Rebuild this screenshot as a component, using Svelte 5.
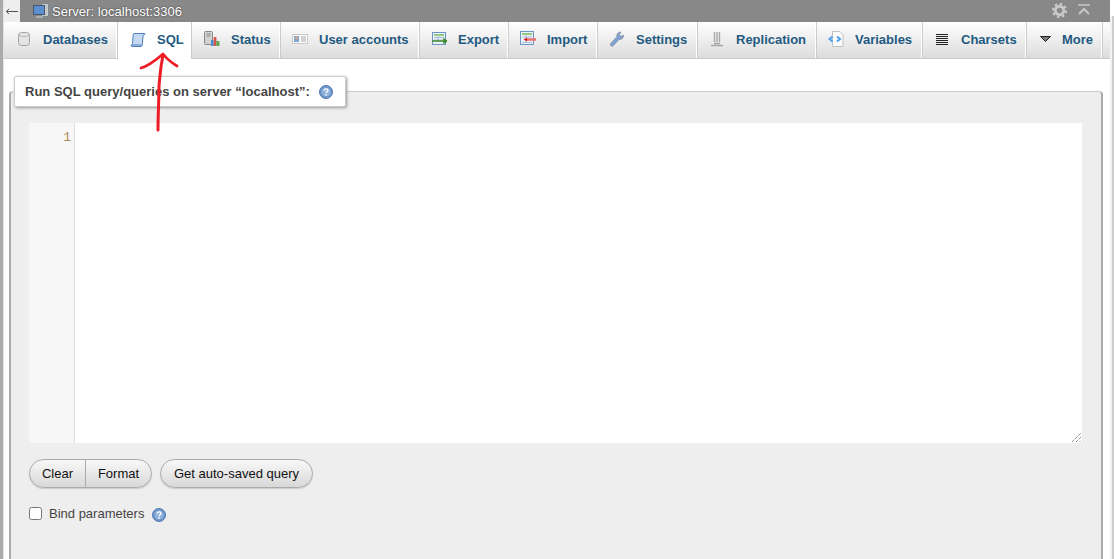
<script>
	const tabs = [
		{ name: 'Databases', w: 113, icon: 'db' },
		{ name: 'SQL', w: 75, icon: 'sql', active: true },
		{ name: 'Status', w: 88, icon: 'status' },
		{ name: 'User accounts', w: 139, icon: 'users' },
		{ name: 'Export', w: 89, icon: 'export' },
		{ name: 'Import', w: 89, icon: 'import' },
		{ name: 'Settings', w: 100, icon: 'settings' },
		{ name: 'Replication', w: 119, icon: 'replication' },
		{ name: 'Variables', w: 106, icon: 'variables' },
		{ name: 'Charsets', w: 104, icon: 'charsets' },
		{ name: 'More', w: 76, icon: 'more' }
	]
</script>

{#snippet help()}
	<svg class='help' width='14' height='14' viewBox='0 0 14 14'>
		<circle cx='7' cy='7' r='6.500' fill='#6d95c9' stroke='#4f7bb5' />
		<circle cx='7' cy='7' r='4.600' fill='#8fb2dc' />
		<path d='M5.200 5.600c.1-1.200 1-1.700 1.900-1.700 1.100 0 1.800.6 1.800 1.500 0 1.300-1.600 1.300-1.600 2.500' fill='none' stroke='#fff' stroke-width='1.400' />
		<rect x='6.400' y='9' width='1.500' height='1.500' fill='#fff' />
	</svg>
{/snippet}

{#snippet tabIcon(kind)}
	<svg width='16' height='16' viewBox='0 0 16 16'>
		{#if kind === 'db'}
			<rect x='2.500' y='1.500' width='11' height='13' rx='3' fill='#e4e4e4' stroke='#a5a5a5' />
			<path d='M3 4c2 2 8 2 10 0' fill='none' stroke='#b5b5b5' />
		{:else if kind === 'sql'}
			<path d='M4 1.500c-.5 0-.7.600-.8 1.500L2.500 11.500c-.1 1-.6 1.500-1.500 1.500 0 1 .5 1.500 1.200 1.500h8.800c.8 0 1.100-.6 1.200-1.500l.9-9.500c.1-.8.600-1 1.900-1 0-.6-.4-1-1-1z' fill='#c5daf2' stroke='#4d80bb' />
			<path d='M2 13h9.500' stroke='#4d80bb' />
		{:else if kind === 'status'}
			<rect x='.5' y='.5' width='8' height='13' rx='1' fill='#d2d2d2' stroke='#8a8a8a' />
			<path d='M2.500 3h4M2.500 5h4' stroke='#8a8a8a' />
			<rect x='7' y='9' width='2.700' height='6' fill='#4a8fd0' />
			<rect x='9.700' y='6' width='2.700' height='9' fill='#d9534f' />
			<rect x='12.400' y='10' width='3' height='5' fill='#5aa84f' />
		{:else if kind === 'users'}
			<rect x='.5' y='3.500' width='15' height='9' fill='#fbfbfb' stroke='#c9c9c9' />
			<rect x='2' y='5' width='5' height='6' fill='#7fa6d6' />
			<circle cx='4.500' cy='6.800' r='1.500' fill='#e8a47a' />
			<path d='M9 6h5M9 8h5M9 10h5' stroke='#a9a9a9' />
		{:else if kind === 'export'}
			<rect x='1.500' y='1.500' width='13' height='12' fill='#eef3fa' stroke='#6f94c6' />
			<path d='M3 4h10' stroke='#6fbf55' stroke-width='1.500' />
			<path d='M3 6.500h10M3 9h10M7 4v7' stroke='#a9bcd6' />
			<path d='M1 10h13M13 8l3 2-3 2z' stroke='#3e8a2a' stroke-width='1.300' fill='#3e8a2a' />
		{:else if kind === 'import'}
			<rect x='.5' y='.5' width='13' height='13' fill='#eef3fa' stroke='#6f94c6' />
			<path d='M2 3h10' stroke='#6fbf55' stroke-width='1.500' />
			<path d='M2 6h10M2 11.500h10M6 3v9' stroke='#a9bcd6' />
			<path d='M16 8.500H6' stroke='#f07070' stroke-width='2.500' />
			<path d='M7 6.500 3.500 8.500 7 10.500z' fill='#d92020' />
		{:else if kind === 'settings'}
			<path d='M2.200 15c-1.200-.8-1-2-.3-2.800l6-6.500c-.6-2 .9-4.700 4-4.700l-1.500 2.500 1.300 1.800 2.800-1c.3 2.500-2.100 4.700-4.500 4.100l-5.700 6.300c-.5.600-1.200.8-1.800.3z' fill='#7ba3d8' stroke='#8a8f96' stroke-width='.8' />
		{:else if kind === 'replication'}
			<path d='M5.500 1v10M8 1v10M10.500 1v10' stroke='#a8a8a8' stroke-width='1.400' />
			<path d='M2 14.500h12M5 12.500h6' stroke='#a8a8a8' stroke-width='1.500' />
		{:else if kind === 'variables'}
			<path d='M4.500 .5H12l3 3v12H4.500z' fill='#fbfbfb' stroke='#c2c2c2' />
			<path d='M4.500 5.500 1.500 8l3 2.500' fill='none' stroke='#4da0ee' stroke-width='2' />
			<path d='M9 5.500 12 8l-3 2.500' fill='none' stroke='#4da0ee' stroke-width='2' />
		{:else if kind === 'charsets'}
			<path d='M2 3.500h12M2 5.500h12M2 7.500h12M2 9.500h12M2 11.500h12M2 13.500h12' stroke='#222' />
		{:else}
			<path d='M2.500 5.500h10L7.500 10.500z' fill='#777' stroke='#222' />
		{/if}
	</svg>
{/snippet}

<div id='page'>
	<div class='strip'></div>
	<div class='main'>
		<header>
			<span class='back'>
				<svg width='12' height='7' viewBox='0 0 12 7'>
					<path d='M0 3.500h12M3 .8.500 3.500 3 6.200' fill='none' stroke='#555' />
				</svg>
			</span>
			<svg width='16' height='16' viewBox='0 0 16 16'>
				<rect x='8.500' y='.5' width='7' height='13' fill='#c4c9cc' stroke='#7f8a90' />
				<rect x='.5' y='2.500' width='11' height='9' fill='#5b8fd0' stroke='#47586b' />
				<path d='M3 14h7' stroke='#a8b0b6' stroke-width='2' />
			</svg>
			<span class='server'>Server: localhost:3306</span>
			<span class='grow'></span>
			<svg class='gear' width='15' height='15' viewBox='0 0 16 16'>
				<circle cx='8' cy='8' r='4.500' fill='none' stroke='#c8c8c8' stroke-width='3' />
				<circle cx='8' cy='8' r='7' fill='none' stroke='#c8c8c8' stroke-width='2.400' stroke-dasharray='2.700 2.800' />
			</svg>
			<svg class='collapse' width='14' height='12' viewBox='0 0 14 12'>
				<path d='M1 1h12' stroke='#c8c8c8' stroke-width='1.500' />
				<path d='M2 10 7 5l5 5' fill='none' stroke='#c8c8c8' stroke-width='2' />
			</svg>
		</header>
		<nav>
			{#each tabs as t}
				<a class='tab' class:active={t.active} style='width: {t.w}px'>
					{@render tabIcon(t.icon)}
					<span>{t.name}</span>
				</a>
			{/each}
			<span class='rest'></span>
		</nav>
		<section class='panel'>
			<div class='legend'>
				<span>Run SQL query/queries on server “localhost”:</span>
				{@render help()}
			</div>
			<div class='editor'>
				<div class='gutter'>1</div>
				<div class='code'>
					<svg class='grip' width='9' height='9' viewBox='0 0 9 9'>
						<path d='M0 9 9 0M4 9l5-5M7.500 9 9 7.500' stroke='#555' stroke-dasharray='1 1' />
					</svg>
				</div>
			</div>
			<div class='buttons'>
				<div class='group'>
					<button class='clear'>Clear</button>
					<button class='format'>Format</button>
				</div>
				<div class='group'>
					<button class='wide'>Get auto-saved query</button>
				</div>
			</div>
			<label class='bind'>
				<input type='checkbox' />
				<span>Bind parameters</span>
				{@render help()}
			</label>
		</section>
	</div>
	<div class='edge'></div>
	<svg class='arrow' width='60' height='90' viewBox='0 0 60 90'>
		<path d='M7 22C15 20 22 14 29 8 33 13 38 17 43 20' fill='none' stroke='#ee1c25' stroke-width='2.800' stroke-linecap='round' stroke-linejoin='round' />
		<path d='M29 9C26 24 26 30 25 40 25 52 24 70 24 84' fill='none' stroke='#ee1c25' stroke-width='3' stroke-linecap='round' />
	</svg>
</div>

<style>
	:global(body) {
		margin: 0;
		background: #fff;
		font-family: 'Liberation Sans', Arial, sans-serif;
	}

	#page {
		display: flex;
		width: 1114px;
		height: 559px;
		overflow: hidden;
		position: relative;
	}

	.strip {
		width: 3px;
		border-right: 1px solid #e4e4e4;
		background: #aaa;
		flex: none;
	}

	.main {
		width: 1106px;
		flex: none;
		display: flex;
		flex-direction: column;
	}

	.edge {
		flex: 1;
		margin-top: 16px;
		background: #f2f2f2;
		border-right: 2px solid #ccc;
	}

	header {
		height: 22px;
		background: #888;
		display: flex;
		align-items: center;
		color: #fff;
		font-size: 13px;
	}

	.back {
		width: 16px;
		height: 22px;
		background: #eee;
		display: flex;
		align-items: center;
		justify-content: center;
		margin-right: 13px;
	}

	.server { margin-left: 3px; text-shadow: 0 0 2px #333; letter-spacing: .03px; }
	.grow { flex: 1; }
	.gear { margin-top: -2px; }
	.collapse { margin: -2px 19px 0 10px; }

	nav {
		height: 36px;
		display: flex;
		border-bottom: 1px solid #ccc;
		background: linear-gradient(#fff, #dcdcdc);
	}

	.tab {
		box-sizing: border-box;
		display: flex;
		align-items: center;
		padding: 0 0 2px 12px;
		gap: 11px;
		font-size: 13px;
		font-weight: bold;
		color: #235a81;
		border-right: 1px solid #fff;
		box-shadow: 1px 0 0 #ccc;
	}

	.tab:nth-last-child(2) { gap: 8px; }

	.tab.active {
		background: #fff;
		height: 37px;
		border-right: 1px solid #ccc;
		border-left: 1px solid #ccc;
		box-shadow: none;
	}

	.rest { flex: 1; }

	.panel {
		position: relative;
		margin: 32px 7px 0 5px;
		flex: 1;
		box-sizing: border-box;
		background: #eee;
		border: 1px solid #ccc;
		border-color: #ccc #aaa;
		border-width: 1px 2px 0 2px;
		border-radius: 4px 4px 0 0;
		padding: 31px 19px 0 18px;
	}

	.legend {
		position: absolute;
		left: 3px;
		top: -16px;
		width: 332px;
		height: 31px;
		box-sizing: border-box;
		display: flex;
		align-items: center;
		gap: 9px;
		padding-left: 10px;
		background: #fff;
		border: 1px solid #ccc;
		border-radius: 2px;
		box-shadow: 1px 1px 3px #999;
		font-size: 13px;
		font-weight: bold;
		color: #444;
		letter-spacing: .01px;
	}

	.editor {
		display: flex;
		height: 320px;
		background: #fff;
	}

	.gutter {
		box-sizing: border-box;
		width: 46px;
		background: #f7f7f7;
		border-right: 1px solid #ddd;
		color: #b08a5a;
		font-family: 'Liberation Mono', monospace;
		font-size: 13px;
		text-align: right;
		padding: 7px 3px 0 0;
	}

	.code {
		flex: 1;
		position: relative;
	}

	.grip {
		position: absolute;
		right: 1px;
		bottom: 1px;
	}

	.buttons {
		display: flex;
		gap: 8px;
		margin-top: 16px;
	}

	.group {
		display: flex;
		height: 29px;
		box-sizing: border-box;
		border: 1px solid #aaa;
		border-radius: 15px;
		background: linear-gradient(#f8f8f8, #d8d8d8);
		overflow: hidden;
		box-shadow: 0 1px 1px #ccc;
	}

	button {
		border: none;
		background: none;
		font: 13px 'Liberation Sans', Arial, sans-serif;
		color: #111;
		padding: 0;
		height: 100%;
	}

	button + button {
		border-left: 1px solid #aaa;
	}

	.clear { width: 55px; }
	.format { width: 66px; }
	.wide { width: 151px; }

	.bind {
		display: flex;
		align-items: center;
		margin-top: 17px;
		font-size: 13px;
		color: #444;
	}

	.bind input {
		width: 13px;
		height: 13px;
		margin: 0 7px 0 0;
	}

	.bind .help { margin-left: 8px; margin-top: 3px; }

	.arrow {
		position: absolute;
		left: 134px;
		top: 46px;
		pointer-events: none;
	}
</style>
